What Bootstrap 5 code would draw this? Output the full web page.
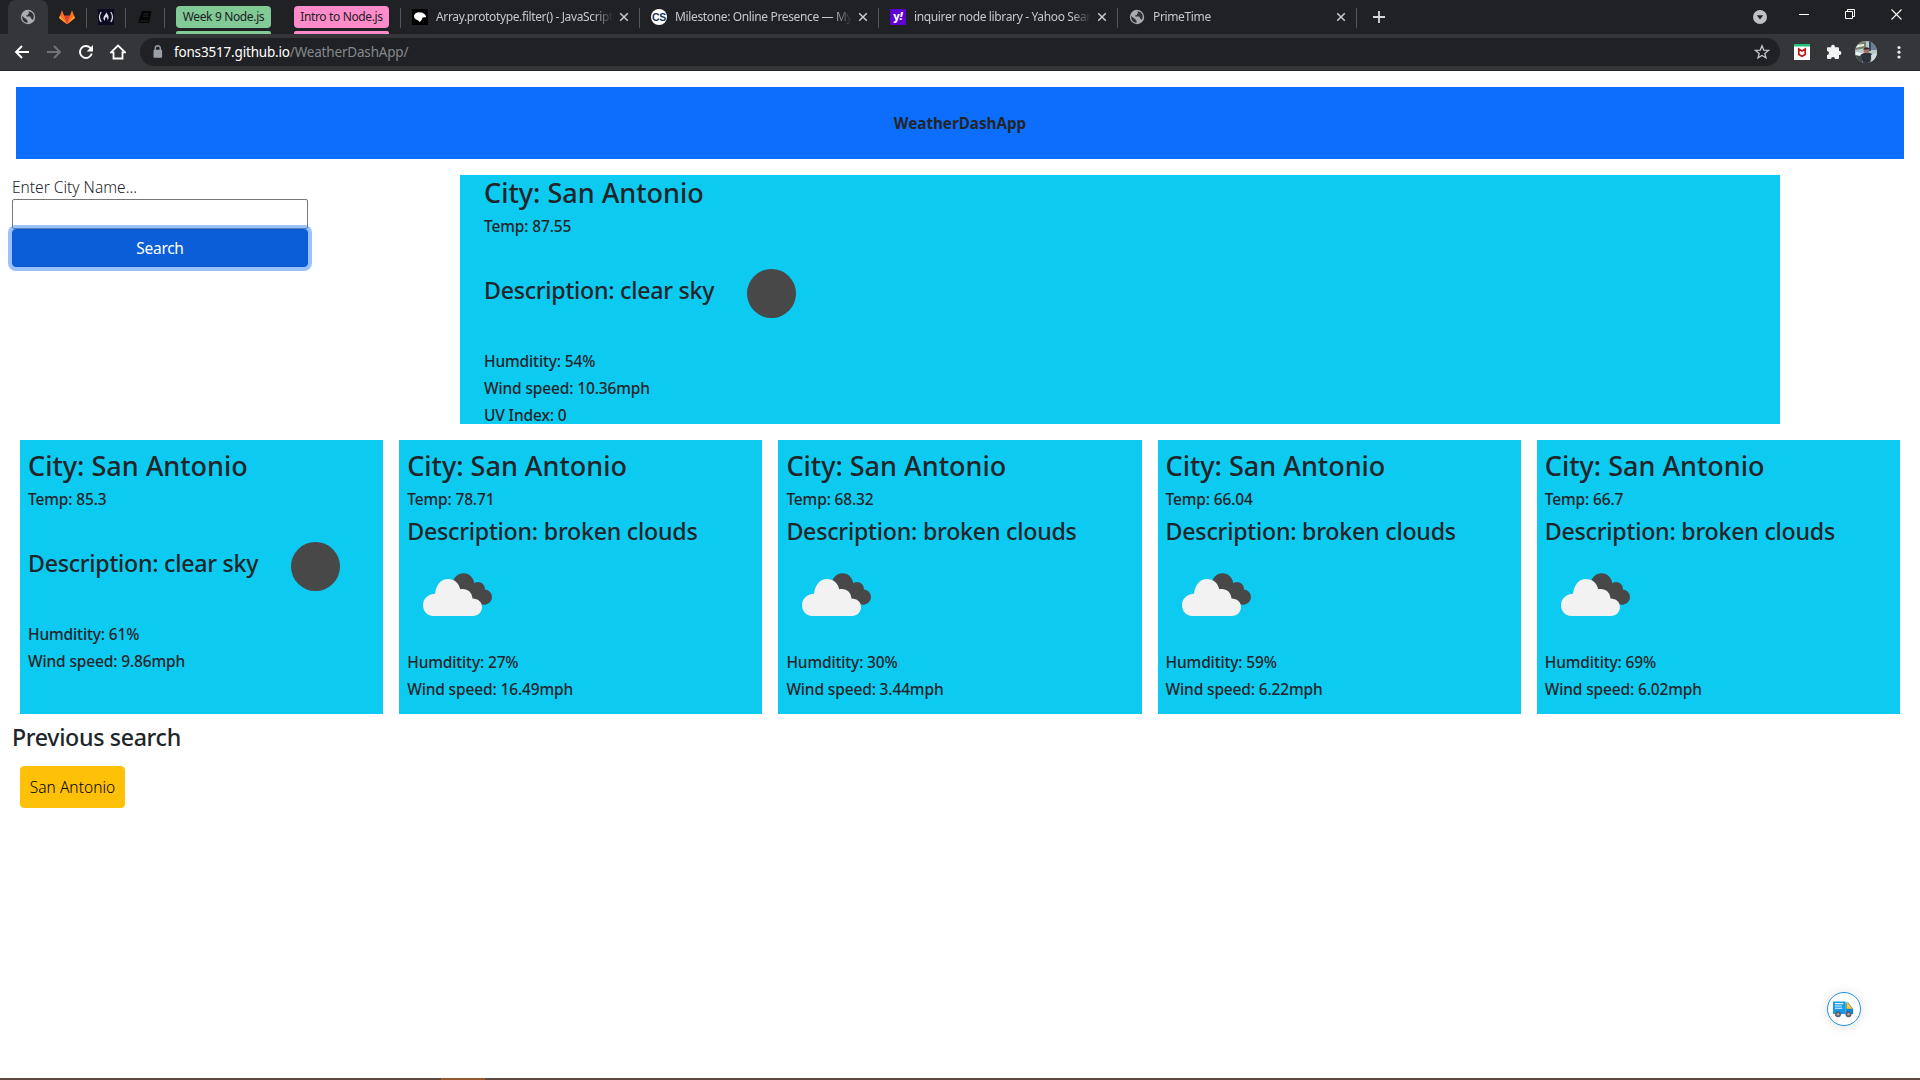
<!DOCTYPE html>
<html lang="en">
<head>
<meta charset="utf-8">
<title>WeatherDashApp</title>
<link rel="stylesheet" href="https://cdn.jsdelivr.net/npm/bootstrap@5.3.0/dist/css/bootstrap.min.css">
<script src="https://cdn.jsdelivr.net/npm/bootstrap@5.3.0/dist/js/bootstrap.bundle.min.js"></script>
<style>
  body { font-family: "Noto Sans", "Open Sans", sans-serif; font-size: 15.5px; font-weight: 350; line-height: 24px; letter-spacing: 0; color: #212529; height: 1080px; overflow: hidden; }
  svg { display: block; flex: none; }

  /* browser window */
  .tabstrip { height: 34px; background: #202124; font-size: 12px; font-weight: 400; letter-spacing: -.36px; color: #c3c7cb; padding-left: 8px; }
  .tab-pin { width: 39px; height: 34px; position: relative; padding-right: 2px; }
  .tab-pin.current { width: 40px; padding-right: 0; background: #35363a; border-radius: 8px 8px 0 0; }
  .tab-sep::after { content: ""; width: 1px; height: 20px; background: #54565a; position: absolute; right: 0; top: 8px; }
  .tab-page { width: 239px; height: 34px; padding-left: 11px; position: relative; }
  .tab-title { width: 176px; margin-left: 8px; overflow: hidden; white-space: nowrap; line-height: 20px; -webkit-mask-image: linear-gradient(90deg, #000 158px, transparent 177px); mask-image: linear-gradient(90deg, #000 158px, transparent 177px); }
  .tab-close { margin-left: 7px; }
  .tab-group { width: 95px; height: 34px; padding-top: 6px; }
  .tab-group span { display: block; height: 22px; line-height: 22px; border-radius: 4px; text-align: center; color: #202124; background: var(--group); }
  .tab-group i { display: block; height: 3px; margin-top: 3px; border-radius: 2px 2px 0 0; background: var(--group); }
  .toolstrip { height: 37px; background: #35363a; border-bottom: 1px solid #27252a; padding: 0 13px 0 14px; }
  .addressbar { width: 1640px; height: 28px; border-radius: 14px; background: #202124; font-size: 13.5px; font-weight: 400; letter-spacing: -.18px; line-height: 26px; color: #85898e; padding: 0 10px 0 10px; margin-left: 14px; }
  .addressbar b { font-weight: 400; color: #fff; }

  /* page */
  .banner { height: 72px; font-size: 15.2px; letter-spacing: 0; margin: 16px 16px 0; }
  .search-form { width: 296px; margin: 0 152px 0 12px; }
  .search-form input { height: 30px; border: 1px solid #767676; border-radius: 2px; outline: 0; }
  .search-form .btn { height: 38px; background: #0b5ed7; border-color: #0a58ca; box-shadow: 0 0 0 4px rgba(49, 132, 253, .5); font-size: 15.5px; letter-spacing: -.3px; border-radius: 4px; position: relative; line-height: 24px; }
  .weather { background: #0dcaf0; }
  .weather h3 { font-size: 27px; line-height: 33.6px; letter-spacing: 0; padding-top: 1px; margin-bottom: 7px; }
  .weather h4, .recent h4 { font-size: 23.2px; line-height: 28.8px; letter-spacing: -.23px; }
  .recent h4 { letter-spacing: -.34px; }
  .weather h6 { font-size: 15.5px; line-height: 19.2px; letter-spacing: -.14px; }
  .weather h3, .weather h4, .weather h6 { white-space: nowrap; }
  .weather svg { width: 100px; height: 100px; }
  .weather .clear-line { letter-spacing: -.27px; }
  .clear-line span { padding-bottom: 6px; }
  .clear-line svg { margin-left: 7px; }
  .clouds-line { margin-bottom: 7.2px; }
  .weather-now { width: 1320px; height: 249px; padding-left: 24px; }
  .weather-day { width: 363.2px; height: 274px; }
  .days { gap: 16px; margin: 16px 20px 0; }
  .recent { padding: 9px 12px; }
  .recent .btn { width: 105px; height: 42px; font-size: 15.5px; font-weight: 350; letter-spacing: .05px; border-radius: 4px; white-space: nowrap; }
  .helper { position: absolute; left: 1827px; top: 992px; width: 34px; height: 34px; border: 1px solid #2491e0; box-shadow: 0 1px 12px rgba(0, 0, 0, .12); }
  .desktop-edge { position: absolute; left: 0; right: 0; bottom: 0; height: 2px; background: linear-gradient(90deg, #5f483f 441px, #935a30 441px 485px, #5f483f 485px); }
</style>
</head>
<body class="bg-white">

<svg width="0" height="0" class="position-absolute">
  <symbol id="globe" viewBox="0 0 16 16"><circle cx="8" cy="8" r="7.2" fill="#a9adb1"/><path d="M2.2 6.8 5 9.400l1.400.3v1l1.200 1v2c-3 0-5.200-2.300-5.400-5zM8.800 2.200C11 2.400 13 4 13.600 6.200c.4 1.600 0 3.400-1 4.800-.5-.7-.7-1.200-1.400-1.400h-.5V8l-.8-.6H6.300V6.200h1.300l.4-.5V4.600h1.600L8.500 3z" fill="#303134"/></symbol>
  <symbol id="cross" viewBox="0 0 10 10"><path d="m1.200 1.200 7.600 7.600m0-7.600L1.200 8.800" stroke="#c9cccf" stroke-width="1.500" fill="none"/></symbol>
  <symbol id="clear" viewBox="0 0 100 100"><circle cx="50.500" cy="49.500" r="24.500" fill="#484848"/></symbol>
  <symbol id="clouds" viewBox="0 0 100 100">
    <g transform="translate(1 0)">
    <g fill="#484848"><circle cx="55.500" cy="38" r="10.700"/><circle cx="70" cy="43" r="7"/><circle cx="76.500" cy="51" r="7.500"/><path d="M52 42h20l6 16.500H57z"/></g>
    <path d="M25.500 70C18.500 70 15 64.500 15 59c0-6 5-11 12-11.200C28 39 33 33 40 33c6 0 11 4 12.200 10.300C59 42 64 46 64.500 52.500 70 52.500 74 56 74 61s-4 9-9 9z" fill="#f2f2f2"/>
    </g>
  </symbol>
</svg>

<header>
  <div class="tabstrip d-flex">
    <div class="tab-pin current d-flex align-items-center justify-content-center"><svg width="16" height="16"><use href="#globe"/></svg></div>
    <div class="tab-pin tab-sep d-flex align-items-center justify-content-center">
      <svg width="16" height="16" viewBox="0 0 16 16"><path d="M3 1.200 5.200 6.800h5.600L13 1.200 15.900 9 8 15.200.1 9z" fill="#fc6d26"/><path d="M5.200 6.800h5.600L8 15.200z" fill="#e24329"/><path d="M1.200 6.600.1 9 8 15.200zM14.800 6.600 15.900 9 8 15.200z" fill="#fca326"/></svg></div>
    <div class="tab-pin tab-sep d-flex align-items-center justify-content-center">
      <svg width="16" height="16" viewBox="0 0 16 16"><path d="M0 0h16v16H0z" fill="#0a0a23"/><path d="M3.200 3Q-.2 8 3.200 13M12.800 3q3.400 5 0 10" stroke="#d8d8e0" stroke-width="1.300" fill="none"/><path d="M8 3.200c2.500 3 2.800 4 2.500 6.300L9.500 12c.4-2-.2-3-1.300-4.200C7 9 6.800 10.500 6.900 12 5 10.600 5 8.600 6.200 7 7.200 5.600 8 5 8 3.200z" fill="#e0e0e6"/></svg></div>
    <div class="tab-pin tab-sep d-flex align-items-center justify-content-center">
      <svg width="14" height="14" viewBox="0 0 14 14"><path d="M4 1h9.500L11 13H1.500C.5 13 .3 12 .6 11z" fill="#050505"/><path d="M5.500 4h5.300M5 6.200h5.300M2 11h8.500" stroke="#292b2f" stroke-width=".8"/></svg></div>
    <div class="tab-group" style="--group:#81c995;margin-left:11px"><span>Week 9 Node.js</span><i></i></div>
    <div class="tab-group" style="--group:#ff8bcb;margin-left:23px"><span>Intro to Node.js</span><i></i></div>
    <div class="tab-sep position-relative" style="width:12px"></div>
    <div class="tab-page tab-sep d-flex align-items-center">
      <svg width="16" height="16" viewBox="0 0 16 16"><path d="M0 0h16v16H0z"/><path d="M2 6.500 3.500 4.300 6 3.200l4 .2 2.500 1.600 1.700 2.200-.6 1-3 .2-1 2.600-1.800 1.900-1.600-1.400L4 10.500 2.300 9z" fill="#fff"/></svg>
      <div class="tab-title">Array.prototype.filter() - JavaScript</div><svg class="tab-close" width="10" height="10"><use href="#cross"/></svg></div>
    <div class="tab-page tab-sep d-flex align-items-center">
      <svg width="16" height="16" viewBox="0 0 16 16"><circle cx="8" cy="8" r="8" fill="#fff"/><text x="8" y="11.800" text-anchor="middle" font-family="Liberation Sans" font-weight="700" font-size="10.500" letter-spacing="-.4" fill="#1d3557">CS</text></svg>
      <div class="tab-title">Milestone: Online Presence — My</div><svg class="tab-close" width="10" height="10"><use href="#cross"/></svg></div>
    <div class="tab-page tab-sep d-flex align-items-center">
      <svg width="16" height="16" viewBox="0 0 16 16"><path d="M0 0h16v16H0z" fill="#5f01d1"/><text x="7.800" y="11" text-anchor="middle" font-family="Noto Sans" font-weight="800" font-size="11" fill="#fff">y<tspan font-style="italic">!</tspan></text></svg>
      <div class="tab-title">inquirer node library - Yahoo Sear</div><svg class="tab-close" width="10" height="10"><use href="#cross"/></svg></div>
    <div class="tab-page tab-sep d-flex align-items-center">
      <svg width="16" height="16"><use href="#globe"/></svg>
      <div class="tab-title">PrimeTime</div><svg class="tab-close" width="10" height="10"><use href="#cross"/></svg></div>
    <svg class="align-self-center" style="margin-left:16px" width="12" height="12" viewBox="0 0 12 12"><path d="M6 0v12M0 6h12" stroke="#d5d7da" stroke-width="1.800"/></svg>
    <div class="d-flex ms-auto" style="padding:6px 18px 0 0">
      <svg style="margin:4px 32px 0 0" width="14" height="14" viewBox="0 0 14 14"><circle cx="7" cy="7" r="7" fill="#bfc1c5"/><path d="M3.800 5.300h6.400L7 9.400z" fill="#202124"/></svg>
      <svg style="margin:3px 36px 0 0" width="10" height="10" viewBox="0 0 10 10"><path d="M0 5.500h10" stroke="#fff"/></svg>
      <svg style="margin:3px 36px 0 0" width="10" height="10" viewBox="0 0 10 10"><path d="M.5 2.500h7v7h-7zM2.500 2.500v-2h7v7h-2" stroke="#fff" fill="none"/></svg>
      <svg style="margin-top:3px" width="11" height="11" viewBox="0 0 11 11"><path d="m.5.5 10 10m0-10-10 10" stroke="#fff" stroke-width="1.100"/></svg>
    </div>
  </div>
  <div class="toolstrip d-flex align-items-center">
    <svg width="16" height="16" viewBox="0 0 16 16"><path d="M15 8H2m6-6L2 8l6 6" stroke="#fff" stroke-width="1.900" fill="none"/></svg>
    <svg class="ms-3" width="16" height="16" viewBox="0 0 16 16"><path d="M1 8h13M8 2l6 6-6 6" stroke="#737477" stroke-width="1.900" fill="none"/></svg>
    <svg class="ms-3" width="16" height="16" viewBox="0 0 16 16"><path d="M13.800 9.500A6 6 0 1 1 12.300 3.800L14 5.500" stroke="#fff" stroke-width="1.900" fill="none"/><path d="M15 1v6.500H8.700z" fill="#fff"/></svg>
    <svg class="ms-3" width="16" height="16" viewBox="0 0 16 16"><path d="M1 8.300 8 1.600l7 6.700h-2.500v6.200h-9V8.300z" stroke="#fff" stroke-width="1.800" fill="none"/></svg>
    <div class="addressbar d-flex align-items-center">
      <svg width="16" height="16" viewBox="0 0 16 16"><path d="M5.300 6V4.200a2.500 2.500 0 0 1 5 0V6" stroke="#9aa0a6" stroke-width="1.400" fill="none"/><rect x="3.500" y="5.700" width="8.600" height="8" rx="1" fill="#9aa0a6"/></svg>
      <div style="margin-left:8px"><b>fons3517.github.io</b>/WeatherDashApp/</div>
      <svg class="ms-auto" width="16" height="16" viewBox="0 0 16 16"><path d="m8 1.800 1.700 4.300 4.700.3-3.600 3 1.200 4.500L8 11.400l-4 2.500 1.200-4.500-3.600-3 4.700-.3z" stroke="#c3c6ca" stroke-width="1.300" fill="none"/></svg>
    </div>
    <svg style="margin-left:14px" width="16" height="16" viewBox="0 0 16 16"><path d="M0 0h16v16H0z" fill="#fff"/><path d="M0 0h16v2.500H0z" fill="#23c17b"/><path d="M4.800 5v5.500L8 12.200l3.200-1.700V5L8 7z" fill="none" stroke="#c01818" stroke-width="1.700"/></svg>
    <svg class="ms-3" width="16" height="16" viewBox="0 0 16 16"><path d="M1 4.500c0-.8.500-1.300 1.300-1.300H5.200a1.900 1.900 0 1 1 3.600 0h2.900c.8 0 1.300.5 1.300 1.300v2.600a1.900 1.900 0 1 1 0 3.700v2.900c0 .8-.5 1.300-1.300 1.300H9a2 2 0 1 0-4 0H2.300C1.500 15 1 14.500 1 13.700V11a2 2 0 1 0 0-4z" fill="#f1f3f4"/></svg>
    <svg style="margin-left:13px" width="22" height="22" viewBox="0 0 22 22"><clipPath id="face"><circle cx="11" cy="11" r="11"/></clipPath><g clip-path="url(#face)"><path d="M0 0h22v22H0z" fill="#b9c9c9"/><path d="M0 0h11v7L0 9z" fill="#78806a"/><path d="M0 4 9 3v2L0 7z" fill="#e6ece6"/><path d="M14 0h2v10h-2z" fill="#34465e"/><path d="M16 0h6v9h-6z" fill="#6d7f95"/><path d="M0 13h9l-2 9H0z" fill="#3d4a45"/><path d="M6 14q5-5 11-1l-2 9H8z" fill="#2b303b"/><circle cx="11.500" cy="9.500" r="2.800" fill="#a6705a"/><path d="M8 8.500q3-4 7-.5l-3 .6z" fill="#30262a"/><path d="m16 14 6-2v8l-5 2z" fill="#d3dce0"/><path d="m1 11 6 1-2 3-5-1z" fill="#eef3f6"/></g></svg>
    <svg class="ms-auto" width="16" height="16" viewBox="0 0 16 16" fill="#e8eaed"><circle cx="8" cy="3.500" r="1.600"/><circle cx="8" cy="8.200" r="1.600"/><circle cx="8" cy="13" r="1.600"/></svg>
  </div>
</header>

<main>
  <div class="banner bg-primary fw-bold d-flex align-items-center justify-content-center">WeatherDashApp</div>

  <div class="d-flex mt-3">
    <form class="search-form d-flex flex-column">
      <label for="city">Enter City Name...</label>
      <input id="city" type="text">
      <button type="button" class="btn btn-primary">Search</button>
    </form>
    <section class="weather weather-now">
      <h3>City: San Antonio</h3>
      <h6>Temp: 87.55</h6>
      <h4 class="clear-line d-flex align-items-center"><span>Description: clear sky</span><svg><use href="#clear"/></svg></h4>
      <h6>Humditity: 54%</h6>
      <h6>Wind speed: 10.36mph</h6>
      <h6 class="mb-0">UV Index: 0</h6>
    </section>
  </div>

  <div class="days d-flex">
    <section class="weather weather-day p-2">
      <h3>City: San Antonio</h3>
      <h6>Temp: 85.3</h6>
      <h4 class="clear-line d-flex align-items-center"><span>Description: clear sky</span><svg><use href="#clear"/></svg></h4>
      <h6>Humditity: 61%</h6>
      <h6>Wind speed: 9.86mph</h6>
    </section>
    <section class="weather weather-day p-2">
      <h3>City: San Antonio</h3>
      <h6>Temp: 78.71</h6>
      <h4 class="clouds-line">Description: broken clouds <svg><use href="#clouds"/></svg></h4>
      <h6>Humditity: 27%</h6>
      <h6>Wind speed: 16.49mph</h6>
    </section>
    <section class="weather weather-day p-2">
      <h3>City: San Antonio</h3>
      <h6>Temp: 68.32</h6>
      <h4 class="clouds-line">Description: broken clouds <svg><use href="#clouds"/></svg></h4>
      <h6>Humditity: 30%</h6>
      <h6>Wind speed: 3.44mph</h6>
    </section>
    <section class="weather weather-day p-2">
      <h3>City: San Antonio</h3>
      <h6>Temp: 66.04</h6>
      <h4 class="clouds-line">Description: broken clouds <svg><use href="#clouds"/></svg></h4>
      <h6>Humditity: 59%</h6>
      <h6>Wind speed: 6.22mph</h6>
    </section>
    <section class="weather weather-day p-2">
      <h3>City: San Antonio</h3>
      <h6>Temp: 66.7</h6>
      <h4 class="clouds-line">Description: broken clouds <svg><use href="#clouds"/></svg></h4>
      <h6>Humditity: 69%</h6>
      <h6>Wind speed: 6.02mph</h6>
    </section>
  </div>

  <section class="recent">
    <h4 class="mb-0">Previous search</h4>
    <button type="button" class="btn btn-warning ms-2 p-0" style="margin-top:14px;padding-top:2px!important">San Antonio</button>
  </section>
</main>

<div class="helper rounded-circle bg-white d-flex align-items-center justify-content-center">
  <svg width="22" height="18" viewBox="0 0 22 18"><path d="M0 1.500h12.500V14H0z" fill="#139be8"/><path d="M1.800 3.600h8.500M1.800 6h7M1.800 8.300h7.500" stroke="#e8f6ff" stroke-width="1.100"/><path d="M12.500 2.500h2.700l5 6.500v5h-7.700z" fill="#1485dd"/><path d="M13.500 3h1.500l4.300 5.800h-5.800z" fill="#fdc829"/><circle cx="5" cy="14.200" r="3" fill="#5a5f69"/><circle cx="5" cy="14.200" r="1.300" fill="#b8a8a0"/><circle cx="15.500" cy="14.200" r="3" fill="#5a5f69"/><circle cx="15.500" cy="14.200" r="1.300" fill="#b8a8a0"/></svg>
</div>
<div class="desktop-edge"></div>
</body>
</html>
